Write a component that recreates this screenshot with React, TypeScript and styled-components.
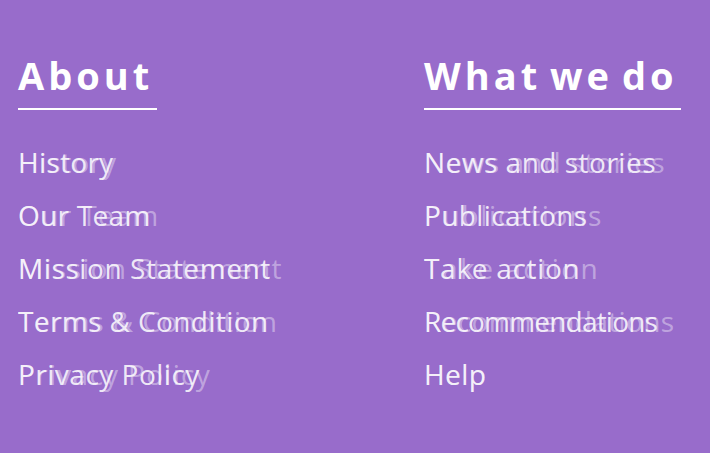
import styled, { createGlobalStyle } from "styled-components"

const GlobalStyle = createGlobalStyle`
  html, body {
    margin: 0;
    padding: 0;
    background: #986ccb;
  }
  body {
    font-family: "Open Sans", "DejaVu Sans", sans-serif;
  }
`

type LinkItem = {
  label: string
  spacing: number
  drift: number
}

// spacing = letter-spacing of the label, drift = letter-spacing of its faded trail
const about: LinkItem[] = [
  { label: "History", spacing: 0.3, drift: 0.8 },
  { label: "Our Team", spacing: 0.3, drift: 1.4 },
  { label: "Mission Statement", spacing: 0.6, drift: 1.3 },
  { label: "Terms & Condition", spacing: 0.4, drift: 0.95 },
  { label: "Privacy Policy", spacing: 0.5, drift: 1.3 },
]

const whatWeDo: LinkItem[] = [
  { label: "News and stories", spacing: 0.5, drift: 1.1 },
  { label: "Publications", spacing: 0.4, drift: 1.7 },
  { label: "Take action", spacing: 0.7, drift: 2.5 },
  { label: "Recommendations", spacing: -0.8, drift: 0.35 },
  { label: "Help", spacing: 0.4, drift: 0.5 },
]

function Column({ title, links }: { title: string; links: LinkItem[] }) {
  return (
    <Col>
      <Heading>{title}</Heading>
      <List>
        {links.map((l) => (
          <li key={l.label}>
            <FooterLink
              href="#"
              $spacing={l.spacing}
              $drift={l.drift}
              data-text={l.label}
            >
              {l.label}
            </FooterLink>
          </li>
        ))}
      </List>
    </Col>
  )
}

export default function App() {
  return (
    <>
      <GlobalStyle />
      <Footer>
        <Column title="About" links={about} />
        <Column title="What we do" links={whatWeDo} />
      </Footer>
    </>
  )
}

const Footer = styled.footer`
  display: grid;
  grid-template-columns: 406px 1fr;
  padding: 52px 0 0 18px;
  height: 453px;
  box-sizing: border-box;
  background: #986ccb;
`

const Col = styled.div`
  display: flex;
  flex-direction: column;
  align-items: flex-start;
`

const Heading = styled.h2`
  margin: 0;
  padding: 0 4px 10px 0;
  font-size: 38px;
  line-height: 46px;
  font-weight: 700;
  letter-spacing: 4px;
  word-spacing: -5px;
  color: #ffffff;
  border-bottom: 2px solid #ffffff;
`

const List = styled.ul`
  list-style: none;
  margin: 0;
  padding: 33px 0 0;
  display: flex;
  flex-direction: column;
  gap: 15px;
`

const FooterLink = styled.a<{ $spacing: number; $drift: number }>`
  position: relative;
  display: inline-block;
  font-size: 28px;
  line-height: 38px;
  letter-spacing: ${(p) => p.$spacing}px;
  color: rgba(255, 255, 255, 0.85);
  text-decoration: none;
  white-space: nowrap;

  &::after {
    content: attr(data-text);
    position: absolute;
    left: 0;
    top: 0;
    color: rgba(255, 255, 255, 0.4);
    letter-spacing: ${(p) => p.$drift}px;
    pointer-events: none;
  }
`
